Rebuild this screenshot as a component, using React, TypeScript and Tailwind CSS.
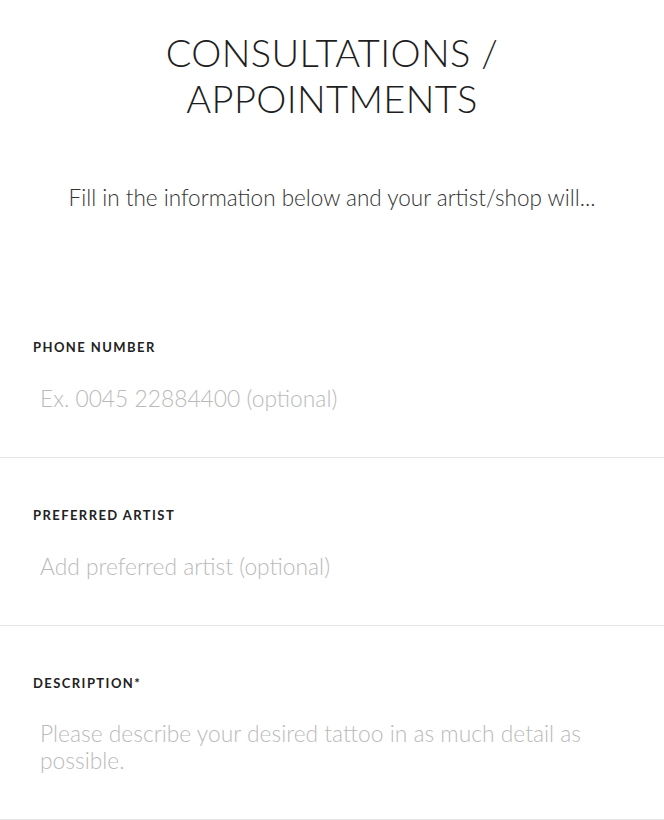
import React from 'react';

const fields = [
  { label: 'PHONE NUMBER', placeholder: 'Ex. 0045 22884400 (optional)', multiline: false },
  { label: 'PREFERRED ARTIST', placeholder: 'Add preferred artist (optional)', multiline: false },
  { label: 'DESCRIPTION*', placeholder: 'Please describe your desired tattoo in as much detail as possible.', multiline: true },
];

export default function App() {
  return (
    <div className="min-h-screen bg-white font-['Lato',sans-serif] text-[#222]">
      <div className="px-8 pt-[29px] text-center">
        <h1 className="text-[38px] font-light leading-[46px] tracking-[0.01em] text-[#1e1e1e]">
          CONSULTATIONS /<br />APPOINTMENTS
        </h1>
        <p className="mt-[63px] text-[22.5px] font-light leading-[28px] text-[#333]">
          Fill in the information below and your artist/shop will...
        </p>
      </div>

      <form className="mt-[78px]">
        {fields.map((f) => (
          <div key={f.label} className="border-b border-[#e6e6e6] pt-[49px] pb-[45px]">
            <label className="block px-[33px] text-[13px] font-bold leading-4 tracking-[0.11em] text-[#222]">
              {f.label}
            </label>
            {f.multiline ? (
              <textarea
                rows={2}
                placeholder={f.placeholder}
                className="mt-[29px] block w-full resize-none bg-transparent px-10 text-[22.8px] font-light leading-[27px] text-[#333] outline-none placeholder:text-[#bababa]"
              />
            ) : (
              <input
                type="text"
                placeholder={f.placeholder}
                className="mt-[29px] block h-7 w-full bg-transparent px-10 text-[22.8px] font-light leading-7 text-[#333] outline-none placeholder:text-[#bababa]"
              />
            )}
          </div>
        ))}
      </form>
    </div>
  );
}
